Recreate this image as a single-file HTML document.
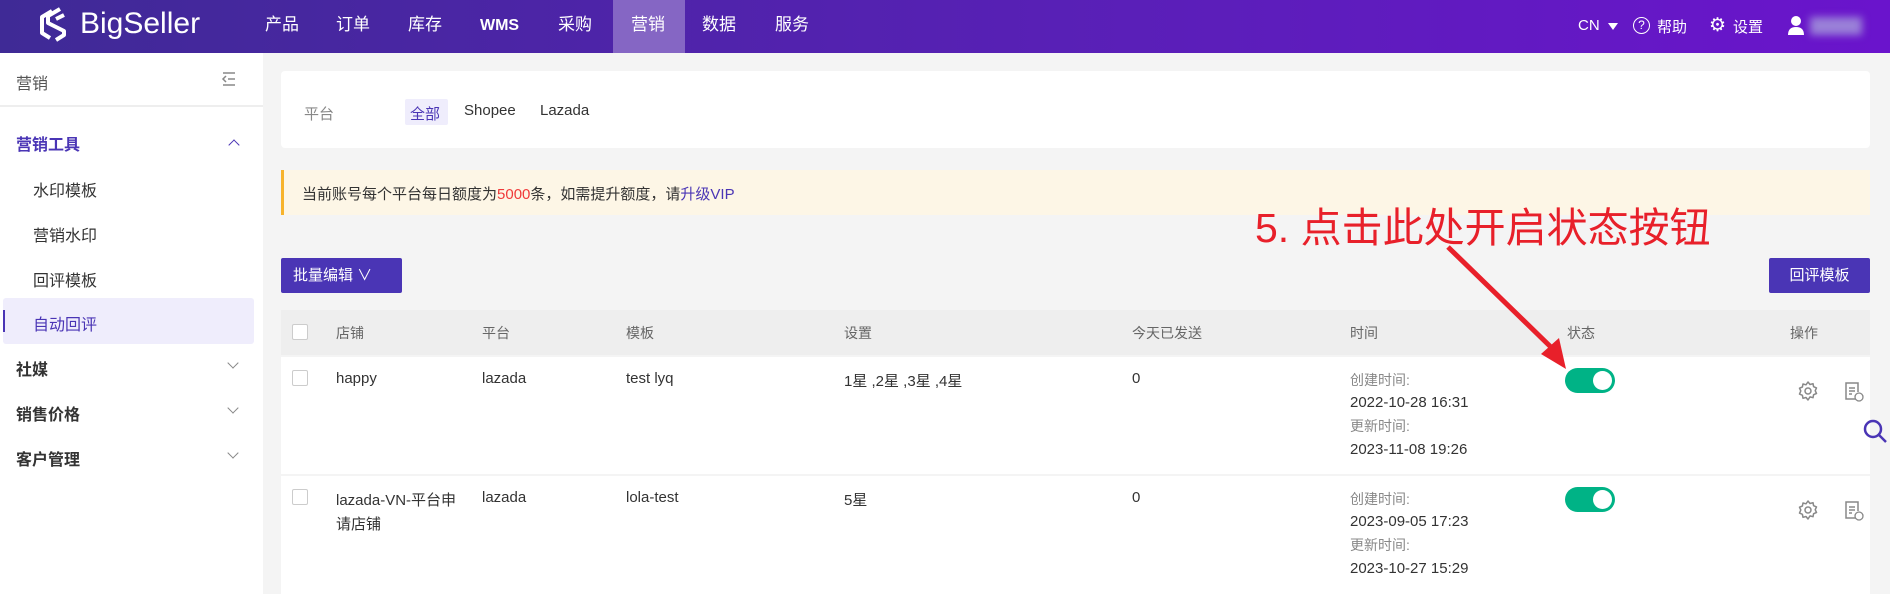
<!DOCTYPE html>
<html><head><meta charset="utf-8"><style>
*{box-sizing:border-box;margin:0;padding:0}
body{width:1890px;height:594px;overflow:hidden;background:#f4f4f4;font-family:"Liberation Sans","Noto Sans CJK SC",sans-serif;color:#333;position:relative}
.a{position:absolute;white-space:nowrap}
.hdr{position:absolute;left:0;top:0;width:1890px;height:53px;background:linear-gradient(90deg,#3f2a96,#5a1fb8 60%,#6a14cc)}
.nav{color:#fff;font-size:17px;top:12px;height:26px;line-height:26px}
.side{position:absolute;left:0;top:53px;width:263px;height:541px;background:#fff}
.s1{font-size:16px;color:#333}
.sb{font-size:16px;font-weight:bold;color:#333}
.th{font-size:14px;color:#666;top:323px}
.td{font-size:15px;color:#333}
.tm{font-size:14px;color:#888}
.cb{position:absolute;width:16px;height:16px;border:1px solid #ccc;border-radius:2px;background:#fff}
.tg{position:absolute;width:50px;height:25px;border-radius:13px;background:#00b386}
.tg:after{content:"";position:absolute;right:3px;top:3px;width:19px;height:19px;border-radius:50%;background:#fff}
.chev{position:absolute;width:8px;height:8px;border-right:1.5px solid #888;border-bottom:1.5px solid #888;transform:rotate(45deg)}
</style></head><body>
<div class="hdr"></div>
<svg class="a" style="left:38px;top:7px" width="36" height="38" viewBox="0 0 36 38"><path d="M14 4 L4 10 V26 L12 31 M22 2 L10 9 V16 L26 24 V28 L18 33" fill="none" stroke="#fff" stroke-width="4" stroke-linejoin="round"/><path d="M26 8 L18 12" stroke="#fff" stroke-width="4"/></svg>
<div class="a" style="left:80px;top:7px;color:#fff;font-size:30px">BigSeller</div>
<div class="a" style="left:613px;top:0;width:72px;height:53px;background:#8566c4"></div>
<div class="a nav" style="left:265px">产品</div>
<div class="a nav" style="left:336px">订单</div>
<div class="a nav" style="left:408px">库存</div>
<div class="a nav" style="left:480px;top:13px;font-weight:bold;font-size:16px">WMS</div>
<div class="a nav" style="left:558px">采购</div>
<div class="a nav" style="left:631px">营销</div>
<div class="a nav" style="left:702px">数据</div>
<div class="a nav" style="left:775px">服务</div>
<div class="a" style="left:1578px;top:17px;color:#fff;font-size:15px">CN</div>
<div class="a" style="left:1608px;top:23px;border-left:5px solid transparent;border-right:5px solid transparent;border-top:7px solid #fff"></div>
<div class="a" style="left:1633px;top:17px;width:17px;height:17px;border:1.5px solid #fff;border-radius:50%;color:#fff;font-size:12px;text-align:center;line-height:14px">?</div>
<div class="a" style="left:1657px;top:16px;color:#fff;font-size:15px">帮助</div>
<div class="a" style="left:1709px;top:14px;color:#fff;font-size:19px">⚙</div>
<div class="a" style="left:1733px;top:16px;color:#fff;font-size:15px">设置</div>
<svg class="a" style="left:1787px;top:15px" width="18" height="20"><circle cx="9" cy="6" r="5" fill="#fff"/><path d="M1 20 Q1 12 9 12 Q17 12 17 20Z" fill="#fff"/></svg>
<div class="a" style="left:1810px;top:17px;width:52px;height:18px;background:#9a80d8;filter:blur(4px)"></div>

<div class="side"></div>
<div class="a s1" style="left:16px;top:70px;color:#555">营销</div>
<svg class="a" style="left:220px;top:71px" width="16" height="16"><path d="M3 2H15M8 8H15M3 14H15M6 5L3 8L6 11" fill="none" stroke="#888" stroke-width="1.5"/></svg>
<div class="a" style="left:0;top:105px;width:263px;height:2px;background:#eee"></div>
<div class="a sb" style="left:16px;top:131px;color:#4a35b5">营销工具</div>
<div class="chev" style="left:230px;top:141px;transform:rotate(-135deg);border-color:#4a35b5"></div>
<div class="a s1" style="left:33px;top:177px">水印模板</div>
<div class="a s1" style="left:33px;top:222px">营销水印</div>
<div class="a s1" style="left:33px;top:267px">回评模板</div>
<div class="a" style="left:3px;top:298px;width:251px;height:46px;background:#efedfc;border-radius:3px"></div>
<div class="a" style="left:3px;top:310px;width:2px;height:22px;background:#4a35b5"></div>
<div class="a s1" style="left:33px;top:311px;color:#4a35b5">自动回评</div>
<div class="a sb" style="left:16px;top:356px">社媒</div><div class="chev" style="left:229px;top:359px"></div>
<div class="a sb" style="left:16px;top:401px">销售价格</div><div class="chev" style="left:229px;top:404px"></div>
<div class="a sb" style="left:16px;top:446px">客户管理</div><div class="chev" style="left:229px;top:449px"></div>

<div class="a" style="left:281px;top:71px;width:1589px;height:77px;background:#fff;border-radius:4px"></div>
<div class="a" style="left:304px;top:103px;font-size:15px;color:#888">平台</div>
<div class="a" style="left:405px;top:99px;width:43px;height:26px;background:#efedfc;border-radius:2px"></div>
<div class="a" style="left:410px;top:103px;font-size:15px;color:#4a35b5">全部</div>
<div class="a" style="left:464px;top:102px;font-size:15px">Shopee</div>
<div class="a" style="left:540px;top:102px;font-size:15px">Lazada</div>

<div class="a" style="left:281px;top:170px;width:1589px;height:45px;background:#fdf6e6;border-left:3px solid #f7b32b"></div>
<div class="a" style="left:302px;top:183px;font-size:15px">当前账号每个平台每日额度为<span style="color:#f03a3a">5000</span>条，如需提升额度，请<span style="color:#4a35b5">升级VIP</span></div>

<div class="a" style="left:1255px;top:194px;font-size:41px;color:#e8202a">5. 点击此处开启状态按钮</div>

<div class="a" style="left:281px;top:258px;width:121px;height:35px;background:#4a35b5;border-radius:2px;color:#fff;font-size:15px;line-height:35px;padding-left:12px">批量编辑 ∨</div>
<div class="a" style="left:1769px;top:258px;width:101px;height:35px;background:#4a35b5;border-radius:2px;color:#fff;font-size:15px;line-height:35px;text-align:center">回评模板</div>

<div class="a" style="left:281px;top:310px;width:1589px;height:45px;background:#eee"></div>
<div class="cb" style="left:292px;top:324px"></div>
<div class="a th" style="left:336px">店铺</div>
<div class="a th" style="left:482px">平台</div>
<div class="a th" style="left:626px">模板</div>
<div class="a th" style="left:844px">设置</div>
<div class="a th" style="left:1132px">今天已发送</div>
<div class="a th" style="left:1350px">时间</div>
<div class="a th" style="left:1567px">状态</div>
<div class="a th" style="left:1790px">操作</div>

<div class="a" style="left:281px;top:357px;width:1589px;height:117px;background:#fff"></div>
<div class="a" style="left:281px;top:476px;width:1589px;height:118px;background:#fff"></div>

<div class="cb" style="left:292px;top:370px"></div>
<div class="a td" style="left:336px;top:370px">happy</div>
<div class="a td" style="left:482px;top:370px">lazada</div>
<div class="a td" style="left:626px;top:370px">test lyq</div>
<div class="a td" style="left:844px;top:370px">1星 ,2星 ,3星 ,4星</div>
<div class="a td" style="left:1132px;top:370px">0</div>
<div class="a tm" style="left:1350px;top:370px">创建时间:</div>
<div class="a td" style="left:1350px;top:394px">2022-10-28 16:31</div>
<div class="a tm" style="left:1350px;top:416px">更新时间:</div>
<div class="a td" style="left:1350px;top:441px">2023-11-08 19:26</div>
<div class="tg" style="left:1565px;top:368px"></div>

<div class="cb" style="left:292px;top:489px"></div>
<div class="a td" style="left:336px;top:489px;line-height:24px">lazada-VN-平台申<br>请店铺</div>
<div class="a td" style="left:482px;top:489px">lazada</div>
<div class="a td" style="left:626px;top:489px">lola-test</div>
<div class="a td" style="left:844px;top:489px">5星</div>
<div class="a td" style="left:1132px;top:489px">0</div>
<div class="a tm" style="left:1350px;top:489px">创建时间:</div>
<div class="a td" style="left:1350px;top:513px">2023-09-05 17:23</div>
<div class="a tm" style="left:1350px;top:535px">更新时间:</div>
<div class="a td" style="left:1350px;top:560px">2023-10-27 15:29</div>
<div class="tg" style="left:1565px;top:487px"></div>

<svg class="a" style="left:1797px;top:380px" width="22" height="22" viewBox="0 0 22 22"><path d="M11 2l2 2.5 3-.8.6 3 2.9 1.2-1.3 2.8 1.3 2.8-2.9 1.2-.6 3-3-.8L11 20l-2-2.5-3 .8-.6-3-2.9-1.2L3.8 11 2.5 8.2l2.9-1.2.6-3 3 .8z" fill="none" stroke="#888" stroke-width="1.5" stroke-linejoin="round"/><circle cx="11" cy="11" r="3" fill="none" stroke="#888" stroke-width="1.5"/></svg>
<svg class="a" style="left:1843px;top:381px" width="22" height="22" viewBox="0 0 22 22"><path d="M13 18H3V2h12v9" fill="none" stroke="#888" stroke-width="1.5"/><path d="M6 7h6M6 10h6M6 13h3" stroke="#888" stroke-width="1.5"/><circle cx="16" cy="16" r="4" fill="#fff" stroke="#888" stroke-width="1.3"/></svg>
<svg class="a" style="left:1797px;top:499px" width="22" height="22" viewBox="0 0 22 22"><path d="M11 2l2 2.5 3-.8.6 3 2.9 1.2-1.3 2.8 1.3 2.8-2.9 1.2-.6 3-3-.8L11 20l-2-2.5-3 .8-.6-3-2.9-1.2L3.8 11 2.5 8.2l2.9-1.2.6-3 3 .8z" fill="none" stroke="#888" stroke-width="1.5" stroke-linejoin="round"/><circle cx="11" cy="11" r="3" fill="none" stroke="#888" stroke-width="1.5"/></svg>
<svg class="a" style="left:1843px;top:500px" width="22" height="22" viewBox="0 0 22 22"><path d="M13 18H3V2h12v9" fill="none" stroke="#888" stroke-width="1.5"/><path d="M6 7h6M6 10h6M6 13h3" stroke="#888" stroke-width="1.5"/><circle cx="16" cy="16" r="4" fill="#fff" stroke="#888" stroke-width="1.3"/></svg>
<svg class="a" style="left:1862px;top:419px" width="28" height="26"><circle cx="11" cy="10" r="8" fill="none" stroke="#4a35b5" stroke-width="2.5"/><path d="M17 16l7 7" stroke="#4a35b5" stroke-width="2.5"/></svg>

<svg class="a" style="left:0;top:0" width="1890" height="594"><path d="M1448 247 L1556 352" stroke="#e8202a" stroke-width="5"/><path d="M1566 369 L1541 354 L1559 338 Z" fill="#e8202a"/></svg>
</body></html>
